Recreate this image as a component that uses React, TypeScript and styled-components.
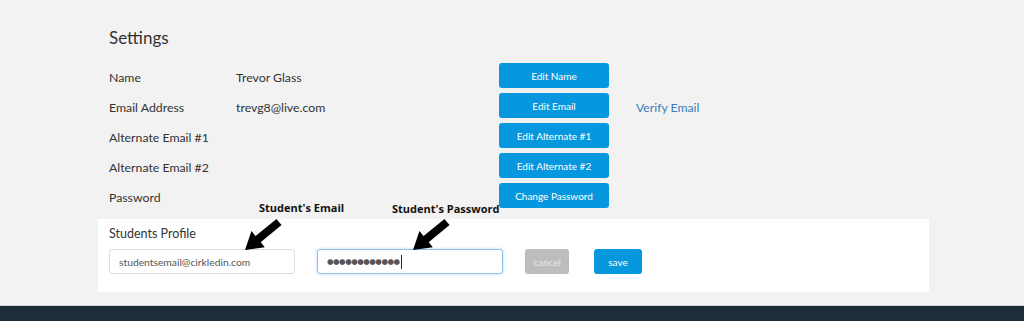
import React from "react";
import styled, { createGlobalStyle } from "styled-components";

const GlobalStyle = createGlobalStyle`
  html, body { margin: 0; padding: 0; background: #f2f2f2; }
  body { font-family: Lato, "Open Sans", sans-serif; color: #333; }
  * { box-sizing: border-box; }
`;

const Page = styled.div`
  width: 1024px;
  height: 321px;
  display: flex;
  flex-direction: column;
  overflow: hidden;
  background: #f2f2f2;
`;

const Main = styled.main`
  flex: 1;
  margin-left: 98px;
  width: 831px;
  display: flex;
  flex-direction: column;
`;

const Section = styled.section`
  padding: 28px 0 0 11px;
`;

const Title = styled.h1`
  margin: 0 0 15px;
  font-family: Lato, sans-serif;
  font-size: 17px;
  font-weight: 400;
  line-height: 20px;
  color: #333;
`;

const Grid = styled.div`
  display: grid;
  grid-template-columns: 127px 263px 110px auto;
  grid-auto-rows: 25px;
  row-gap: 5px;
  align-items: start;
`;

const Label = styled.div`
  font-size: 12.3px;
  line-height: 21px;
  padding-top: 4px;
  color: #333;
  white-space: nowrap;
`;

const Value = styled(Label)``;

const BlueButton = styled.button`
  height: 25px;
  border: none;
  border-radius: 3px;
  background: #0797df;
  color: #fff;
  font-family: Lato, sans-serif;
  font-size: 10px;
  padding: 0;
  cursor: pointer;
`;

const Link = styled.a`
  margin-left: 27px;
  padding-top: 4px;
  font-size: 12.2px;
  line-height: 21px;
  color: #3c7cc0;
  text-decoration: none;
`;

const Panel = styled.div`
  position: relative;
  margin-top: 11px;
  height: 73px;
  background: #fff;
  padding: 7px 0 0 11px;
`;

const PanelTitle = styled.div`
  font-size: 12.5px;
  line-height: 16px;
  color: #333;
  margin-bottom: 7px;
`;

const Row = styled.div`
  display: flex;
  align-items: center;
`;

const Input = styled.div<{ $focused?: boolean }>`
  width: 186px;
  height: 25px;
  border: 1px solid ${(p) => (p.$focused ? "#8cc2ee" : "#dcdcdc")};
  box-shadow: ${(p) => (p.$focused ? "0 0 3px rgba(80,160,230,0.45)" : "none")};
  border-radius: 3px;
  background: #fff;
  margin-right: 22px;
  display: flex;
  align-items: center;
  padding-left: 9px;
  font-size: 10.3px;
  color: #555;
`;

const Dots = styled.span`
  font-family: "DejaVu Sans", sans-serif;
  font-size: 7.5px;
  letter-spacing: -0.5px;
  color: #555;
`;

const Caret = styled.span`
  display: inline-block;
  width: 1px;
  height: 14px;
  background: #222;
  margin-left: 1px;
`;

const SmallButton = styled.button<{ $gray?: boolean; $w: number }>`
  width: ${(p) => p.$w}px;
  height: 25px;
  border: none;
  border-radius: 3px;
  background: ${(p) => (p.$gray ? "#bdbdbd" : "#0797df")};
  color: ${(p) => (p.$gray ? "#e8e8e8" : "#fff")};
  font-family: Lato, sans-serif;
  font-size: 10px;
  padding: 0;
  margin-right: 25px;
`;

const Note = styled.div<{ $x: number; $y: number }>`
  position: absolute;
  left: ${(p) => p.$x}px;
  top: ${(p) => p.$y}px;
  font-family: "Open Sans", sans-serif;
  font-weight: 700;
  font-size: 11px;
  line-height: 16px;
  color: #111;
  white-space: nowrap;
`;

const ArrowSvg = styled.svg`
  position: absolute;
  left: 0;
  top: 0;
  overflow: visible;
  pointer-events: none;
`;

function Arrow({ tail, tip }: { tail: [number, number]; tip: [number, number] }) {
  const dx = tip[0] - tail[0];
  const dy = tip[1] - tail[1];
  const L = Math.hypot(dx, dy);
  const ux = dx / L;
  const uy = dy / L;
  const nx = -uy;
  const ny = ux;
  const sw = 8;
  const hl = 17;
  const hw = 21;
  const neck: [number, number] = [tip[0] - ux * hl, tip[1] - uy * hl];
  const pts: [number, number][] = [
    [tail[0] + (nx * sw) / 2, tail[1] + (ny * sw) / 2],
    [neck[0] + (nx * sw) / 2, neck[1] + (ny * sw) / 2],
    [neck[0] + (nx * hw) / 2, neck[1] + (ny * hw) / 2],
    tip,
    [neck[0] - (nx * hw) / 2, neck[1] - (ny * hw) / 2],
    [neck[0] - (nx * sw) / 2, neck[1] - (ny * sw) / 2],
    [tail[0] - (nx * sw) / 2, tail[1] - (ny * sw) / 2],
  ];
  return (
    <ArrowSvg width="1" height="1">
      <polygon points={pts.map((p) => p.join(",")).join(" ")} fill="#000" />
    </ArrowSvg>
  );
}

const Footer = styled.footer`
  height: 16px;
  background: #1f2d38;
  border-top: 1px solid #cfd4db;
`;

const rows = [
  { label: "Name", value: "Trevor Glass", button: "Edit Name" },
  { label: "Email Address", value: "trevg8@live.com", button: "Edit Email", link: "Verify Email" },
  { label: "Alternate Email #1", value: "", button: "Edit Alternate #1" },
  { label: "Alternate Email #2", value: "", button: "Edit Alternate #2" },
  { label: "Password", value: "", button: "Change Password" },
];

export default function App() {
  return (
    <Page>
      <GlobalStyle />
      <Main>
        <Section>
          <Title>Settings</Title>
          <Grid>
            {rows.map((r) => (
              <React.Fragment key={r.label}>
                <Label>{r.label}</Label>
                <Value>{r.value}</Value>
                <BlueButton>{r.button}</BlueButton>
                {r.link ? <Link href="#">{r.link}</Link> : <span />}
              </React.Fragment>
            ))}
          </Grid>
        </Section>
        <Panel>
          <PanelTitle>Students Profile</PanelTitle>
          <Row>
            <Input>studentsemail@cirkledin.com</Input>
            <Input $focused>
              <Dots>●●●●●●●●●●●●</Dots>
              <Caret />
            </Input>
            <SmallButton $gray $w={44}>cancel</SmallButton>
            <SmallButton $w={48}>save</SmallButton>
          </Row>
          <Note $x={161} $y={-19}>Student's Email</Note>
          <Note $x={294} $y={-18}>Student's Password</Note>
          <Arrow tail={[181, 3]} tip={[147, 31]} />
          <Arrow tail={[349, 3]} tip={[315, 31]} />
        </Panel>
      </Main>
      <Footer />
    </Page>
  );
}
